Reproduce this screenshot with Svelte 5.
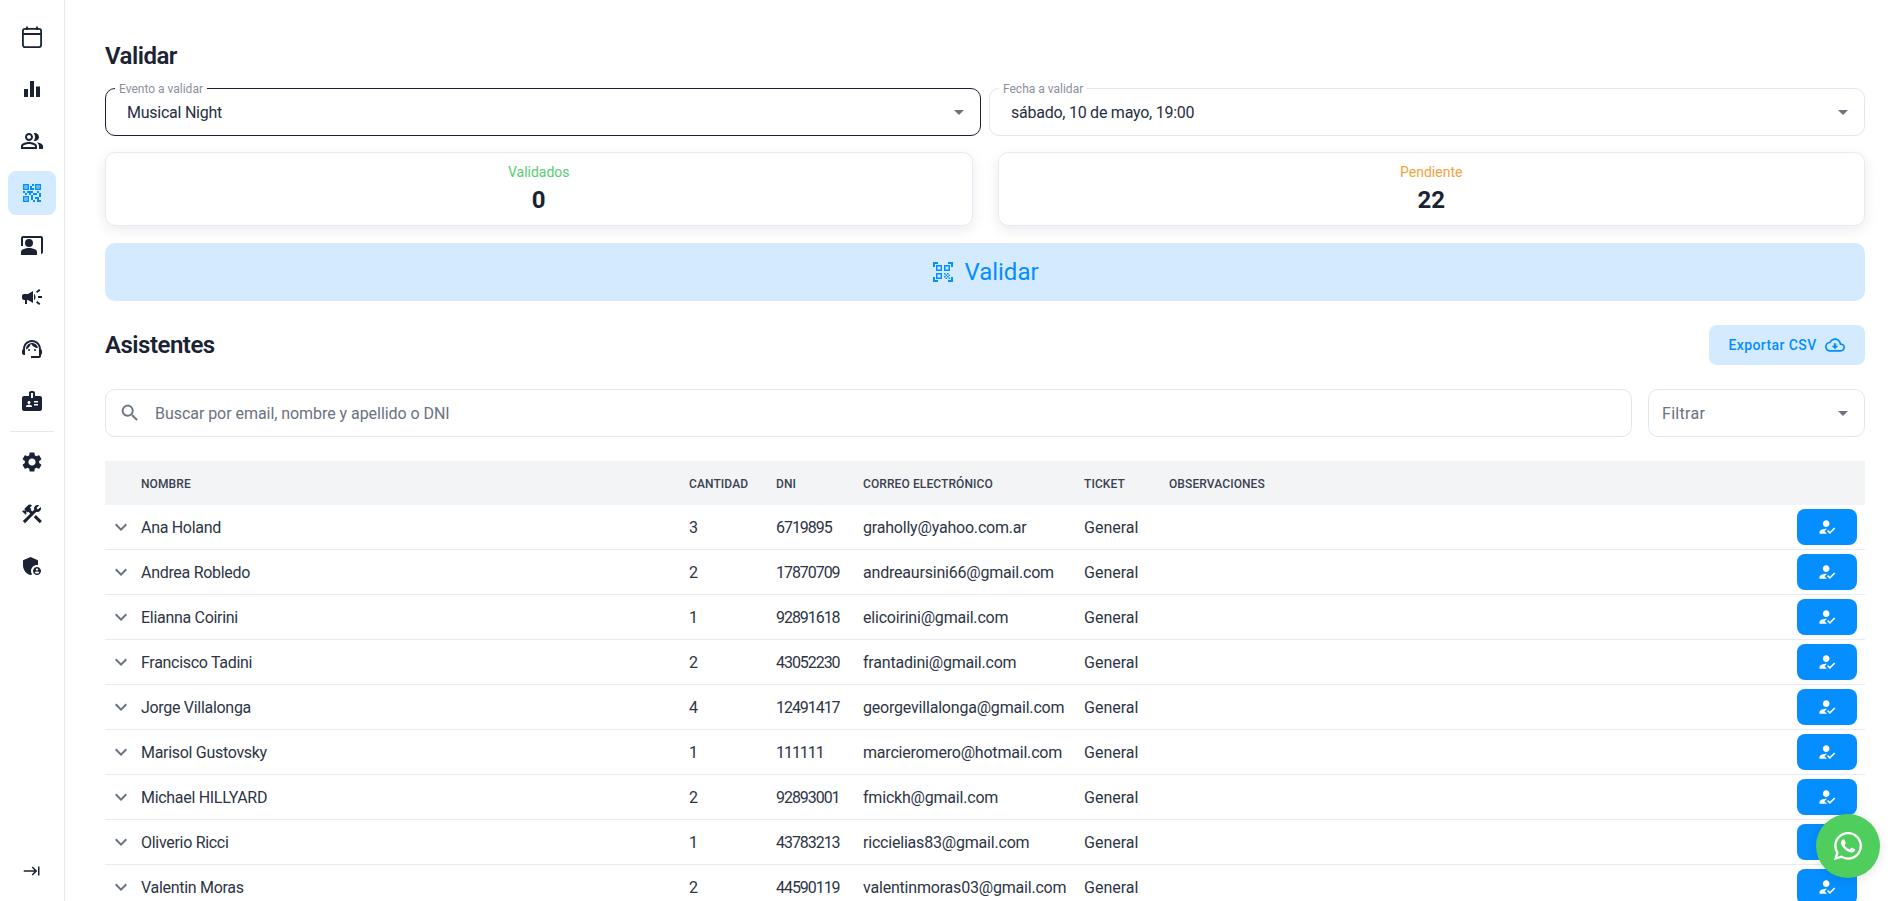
<script lang="ts">
	const topNav = [
		{ id: 'calendar', d: '', active: false },
		{ id: 'chart', d: 'M4 12h4v8H4zM10 4h4v16h-4zM16 9.5h4V20h-4z', active: false },
		{ id: 'people', d: 'M16.67 13.13C18.04 14.06 19 15.32 19 17v3h4v-3c0-2.18-3.57-3.47-6.33-3.87zM15 12c2.21 0 4-1.79 4-4s-1.79-4-4-4c-.47 0-.91.1-1.33.24C14.5 5.27 15 6.58 15 8s-.5 2.73-1.33 3.76c.42.14.86.24 1.33.24zM9 12c2.21 0 4-1.79 4-4s-1.79-4-4-4-4 1.79-4 4 1.79 4 4 4zm0-6c1.1 0 2 .9 2 2s-.9 2-2 2-2-.9-2-2 .9-2 2-2zM9 13c-2.67 0-8 1.34-8 4v3h16v-3c0-2.66-5.33-4-8-4zm6 5H3v-.99C3.2 16.29 6.3 15 9 15s5.8 1.29 6 2v1z', active: false },
		{ id: 'qr', d: 'M15 21h-2v-2h2v2zM13 14h-2v5h2v-5zM21 12h-2v4h2v-4zM19 10h-2v2h2v-2zM7 12H5v2h2v-2zM5 10H3v2h2v-2zM12 5h2V3h-2v2zM4.5 4.5v3h3v-3h-3zM9 9H3V3h6v6zM4.5 16.5v3h3v-3h-3zM9 21H3v-6h6v6zM16.5 4.5v3h3v-3h-3zM21 9h-6V3h6v6zM19 19v-3h-4v2h2v3h4v-2h-2zM17 12h-4v2h4v-2zM13 10H7v2h2v2h2v-2h2v-2zM14 9V7h-2V5h-2v4h4zM6.75 5.25h-1.5v1.5h1.5v-1.5zM6.75 17.25h-1.5v1.5h1.5v-1.5zM18.75 5.25h-1.5v1.5h1.5v-1.5z', active: true },
		{ id: 'present', d: 'M21 3H3C1.9 3 1 3.9 1 5v8h2V5h18v16c1.1 0 2-.9 2-2V5c0-1.1-.9-2-2-2zM13 10a4 4 0 1 1-8 0 4 4 0 0 1 8 0zM15.39 16.56C13.71 15.7 11.53 15 9 15c-2.53 0-4.71.7-6.39 1.56C1.61 17.07 1 18.1 1 19.22V22h16v-2.78c0-1.12-.61-2.15-1.61-2.66z', active: false },
		{ id: 'campaign', d: 'M18 11v2h4v-2h-4zm-2 6.61c.96.71 2.21 1.65 3.2 2.39.4-.53.8-1.07 1.2-1.6-.99-.74-2.24-1.68-3.2-2.4-.4.54-.8 1.08-1.2 1.61zM20.4 5.6c-.4-.53-.8-1.07-1.2-1.6-.99.74-2.24 1.68-3.2 2.4.4.53.8 1.07 1.2 1.6.96-.72 2.21-1.65 3.2-2.4zM4 9c-1.1 0-2 .9-2 2v2c0 1.1.9 2 2 2h1v4h2v-4h1l5 3V6L8 9H4zm11.5 3c0-1.33-.58-2.53-1.5-3.35v6.69c.92-.81 1.5-2.01 1.5-3.34z', active: false },
		{ id: 'support', d: 'M21 12.22C21 6.73 16.74 3 12 3c-4.69 0-9 3.65-9 9.28-.6.34-1 .98-1 1.72v2c0 1.1.9 2 2 2h1v-6.1c0-3.87 3.13-7 7-7s7 3.13 7 7V19h-8v2h8c1.1 0 2-.9 2-2v-1.22c.59-.31 1-.92 1-1.64v-2.3c0-.7-.41-1.31-1-1.62zM10 13a1 1 0 1 1-2 0 1 1 0 0 1 2 0zM16 13a1 1 0 1 1-2 0 1 1 0 0 1 2 0zM18 11.03C17.52 8.18 15.04 6 12.05 6c-3.03 0-6.29 2.51-6.03 6.45 2.47-1.01 4.33-3.21 4.86-5.89 1.31 2.63 4 4.44 7.12 4.47z', active: false },
		{ id: 'badge', d: 'M20 7h-5V4c0-1.1-.9-2-2-2h-2c-1.1 0-2 .9-2 2v3H4c-1.1 0-2 .9-2 2v11c0 1.1.9 2 2 2h16c1.1 0 2-.9 2-2V9c0-1.1-.9-2-2-2zM9 12c.83 0 1.5.67 1.5 1.5S9.83 15 9 15s-1.5-.67-1.5-1.5S8.17 12 9 12zm3 6H6v-.75c0-1 2-1.5 3-1.5s3 .5 3 1.5V18zm1-9h-2V4h2v5zm5 7.5h-4V15h4v1.5zm0-3h-4V12h4v1.5z', active: false }
	];

	const bottomNav = [
		{ id: 'settings', d: 'M19.14 12.94c.04-.3.06-.61.06-.94 0-.32-.02-.64-.07-.94l2.03-1.58c.18-.14.23-.41.12-.61l-1.92-3.32c-.12-.22-.37-.29-.59-.22l-2.39.96c-.5-.38-1.03-.7-1.62-.94l-.36-2.54c-.04-.24-.24-.41-.48-.41h-3.84c-.24 0-.43.17-.47.41l-.36 2.54c-.59.24-1.13.57-1.62.94l-2.39-.96c-.22-.08-.47 0-.59.22L2.74 8.87c-.12.21-.08.47.12.61l2.03 1.58c-.05.3-.09.63-.09.94s.02.64.07.94l-2.03 1.58c-.18.14-.23.41-.12.61l1.92 3.32c.12.22.37.29.59.22l2.39-.96c.5.38 1.03.7 1.62.94l.36 2.54c.05.24.24.41.48.41h3.84c.24 0 .44-.17.47-.41l.36-2.54c.59-.24 1.13-.56 1.62-.94l2.39.96c.22.08.47 0 .59-.22l1.92-3.32c.12-.22.07-.47-.12-.61l-2.01-1.58zM12 15.6c-1.98 0-3.6-1.62-3.6-3.6s1.62-3.6 3.6-3.6 3.6 1.62 3.6 3.6-1.62 3.6-3.6 3.6z' },
		{ id: 'tools', d: 'm13.7826 15.1719 2.1213-2.1213 5.9963 5.9962-2.1213 2.1213zM17.5 10c1.93 0 3.5-1.57 3.5-3.5 0-.58-.16-1.12-.41-1.6l-2.7 2.7-1.49-1.49 2.7-2.7c-.48-.25-1.02-.41-1.6-.41C15.57 3 14 4.57 14 6.5c0 .41.08.8.21 1.16l-1.85 1.85-1.78-1.78.71-.71-1.41-1.41L12 3.49c-1.17-1.17-3.07-1.17-4.24 0L4.22 7.03l1.41 1.41H2.81l-.71.71 3.54 3.54.71-.71V9.15l1.41 1.41.71-.71 1.78 1.78-7.41 7.41 2.12 2.12L16.34 9.79c.36.13.75.21 1.16.21z' },
		{ id: 'admin', d: 'M17 11c.34 0 .67.04 1 .09V6.27L10.5 3 3 6.27v4.91c0 4.54 3.2 8.79 7.5 9.82.55-.13 1.08-.32 1.6-.55-.69-.98-1.1-2.17-1.1-3.45 0-3.31 2.69-6 6-6zM17 13c-2.21 0-4 1.79-4 4s1.79 4 4 4 4-1.79 4-4-1.79-4-4-4zm0 1.38c.62 0 1.12.51 1.12 1.12s-.51 1.12-1.12 1.12-1.12-.51-1.12-1.12.5-1.12 1.12-1.12zm0 5.37c-.93 0-1.74-.46-2.24-1.17.05-.72 1.51-1.08 2.24-1.08s2.19.36 2.24 1.08c-.5.71-1.31 1.17-2.24 1.17z' }
	];

	const attendees = [
		{ name: 'Ana Holand', qty: 3, dni: '6719895', email: 'graholly@yahoo.com.ar' },
		{ name: 'Andrea Robledo', qty: 2, dni: '17870709', email: 'andreaursini66@gmail.com' },
		{ name: 'Elianna Coirini', qty: 1, dni: '92891618', email: 'elicoirini@gmail.com' },
		{ name: 'Francisco Tadini', qty: 2, dni: '43052230', email: 'frantadini@gmail.com' },
		{ name: 'Jorge Villalonga', qty: 4, dni: '12491417', email: 'georgevillalonga@gmail.com' },
		{ name: 'Marisol Gustovsky', qty: 1, dni: '111111', email: 'marcieromero@hotmail.com' },
		{ name: 'Michael HILLYARD', qty: 2, dni: '92893001', email: 'fmickh@gmail.com' },
		{ name: 'Oliverio Ricci', qty: 1, dni: '43783213', email: 'riccielias83@gmail.com' },
		{ name: 'Valentin Moras', qty: 2, dni: '44590119', email: 'valentinmoras03@gmail.com' }
	];

	const caret = 'M7 10l5 5 5-5z';
</script>

<div class="shell">
	<aside class="sidebar">
		{#each topNav as item}
			<button class="nav-item" class:active={item.active} aria-label={item.id}>
				{#if item.id === 'calendar'}
					<svg viewBox="0 0 24 24" class="stroke-icon"><rect x="2.9" y="3.9" width="18.2" height="18.2" rx="2" /><path d="M3 9h18M7 1.5V5M17 1.5V5" /></svg>
				{:else}
					<svg viewBox="0 0 24 24"><path d={item.d} /></svg>
				{/if}
			</button>
		{/each}
		<div class="nav-divider"></div>
		{#each bottomNav as item}
			<button class="nav-item" aria-label={item.id}>
				<svg viewBox="0 0 24 24"><path d={item.d} /></svg>
			</button>
		{/each}
		<button class="nav-item collapse" aria-label="expandir">
			<svg viewBox="0 0 24 24"><path d="M11.59 7.41 15.17 11H1v2h14.17l-3.59 3.59L13 18l6-6-6-6-1.41 1.41zM20 6v12h2V6h-2z" /></svg>
		</button>
	</aside>

	<main class="content">
		<h1>Validar</h1>

		<div class="selects">
			<div class="field focused">
				<span class="field-label">Evento a validar</span>
				<span class="field-value">Musical Night</span>
				<svg viewBox="0 0 24 24" class="caret"><path d={caret} /></svg>
			</div>
			<div class="field">
				<span class="field-label">Fecha a validar</span>
				<span class="field-value">sábado, 10 de mayo, 19:00</span>
				<svg viewBox="0 0 24 24" class="caret"><path d={caret} /></svg>
			</div>
		</div>

		<div class="stats">
			<div class="stat">
				<span class="stat-label green">Validados</span>
				<strong>0</strong>
			</div>
			<div class="stat">
				<span class="stat-label orange">Pendiente</span>
				<strong>22</strong>
			</div>
		</div>

		<button class="validate">
			<svg viewBox="0 0 24 24"><path d="M9.5 6.5v3h-3v-3h3M11 5H5v6h6V5zm-1.5 9.5v3h-3v-3h3M11 13H5v6h6v-6zm6.5-6.5v3h-3v-3h3M19 5h-6v6h6V5zm-6 8h1.5v1.5H13V13zm1.5 1.5H16V16h-1.5v-1.5zM16 13h1.5v1.5H16V13zm-3 3h1.5v1.5H13V16zm1.5 1.5H16V19h-1.5v-1.5zM16 16h1.5v1.5H16V16zm1.5-1.5H19V16h-1.5v-1.5zm0 3H19V19h-1.5v-1.5zM22 7h-2V4h-3V2h5v5zm0 15v-5h-2v3h-3v2h5zM2 22h5v-2H4v-3H2v5zM2 2v5h2V4h3V2H2z" /></svg>
			Validar
		</button>

		<div class="section-head">
			<h2>Asistentes</h2>
			<button class="export">
				Exportar CSV
				<svg viewBox="0 0 24 24"><path d="M19.35 10.04C18.67 6.59 15.64 4 12 4 9.11 4 6.6 5.64 5.35 8.04 2.34 8.36 0 10.91 0 14c0 3.31 2.69 6 6 6h13c2.76 0 5-2.24 5-5 0-2.64-2.05-4.78-4.65-4.96zM19 18H6c-2.21 0-4-1.79-4-4 0-2.05 1.53-3.76 3.56-3.97l1.07-.11.5-.95C8.08 7.14 9.94 6 12 6c2.62 0 4.88 1.86 5.39 4.43l.3 1.5 1.53.11c1.56.1 2.78 1.41 2.78 2.96 0 1.65-1.35 3-3 3zm-5.55-8h-2.9v3H8l4 4 4-4h-2.55z" /></svg>
			</button>
		</div>

		<div class="filters">
			<div class="search">
				<svg viewBox="0 0 24 24"><path d="M15.5 14h-.79l-.28-.27C15.41 12.59 16 11.11 16 9.5 16 5.91 13.09 3 9.5 3S3 5.91 3 9.5 5.91 16 9.5 16c1.61 0 3.09-.59 4.23-1.57l.27.28v.79l5 4.99L20.49 19l-4.99-5zm-6 0C7.01 14 5 11.99 5 9.5S7.01 5 9.5 5 14 7.01 14 9.5 11.99 14 9.5 14z" /></svg>
				<span>Buscar por email, nombre y apellido o DNI</span>
			</div>
			<div class="filter">
				<span>Filtrar</span>
				<svg viewBox="0 0 24 24" class="caret"><path d={caret} /></svg>
			</div>
		</div>

		<table>
			<colgroup>
				<col style="width:36px" />
				<col style="width:548px" />
				<col style="width:87px" />
				<col style="width:87px" />
				<col style="width:221px" />
				<col style="width:85px" />
				<col />
				<col style="width:68px" />
			</colgroup>
			<thead>
				<tr>
					<th></th>
					<th>Nombre</th>
					<th>Cantidad</th>
					<th>DNI</th>
					<th>Correo electrónico</th>
					<th>Ticket</th>
					<th>Observaciones</th>
					<th></th>
				</tr>
			</thead>
			<tbody>
				{#each attendees as a}
					<tr>
						<td class="expand">
							<svg viewBox="0 0 24 24"><path d="M16.59 8.59 12 13.17 7.41 8.59 6 10l6 6 6-6z" /></svg>
						</td>
						<td class="name">{a.name}</td>
						<td>{a.qty}</td>
						<td class="dni">{a.dni}</td>
						<td class="email">{a.email}</td>
						<td>General</td>
						<td></td>
						<td>
							<button class="check-in" aria-label="validar asistente">
								<svg viewBox="0 0 24 24"><path d="M9 17l3-2.94c-.39-.04-.68-.06-1-.06-2.67 0-8 1.34-8 4v2h9l-3-3zm2-5c2.21 0 4-1.79 4-4s-1.79-4-4-4-4 1.79-4 4 1.79 4 4 4m4.47 8.5L12 17l1.4-1.41 2.07 2.08 5.13-5.17 1.4 1.41z" /></svg>
							</button>
						</td>
					</tr>
				{/each}
			</tbody>
		</table>
	</main>

	<button class="whatsapp" aria-label="WhatsApp">
		<svg viewBox="0 0 24 24"><path d="M17.472 14.382c-.297-.149-1.758-.867-2.03-.967-.273-.099-.471-.148-.67.15-.197.297-.767.966-.94 1.164-.173.199-.347.223-.644.075-.297-.15-1.255-.463-2.39-1.475-.883-.788-1.48-1.761-1.653-2.059-.173-.297-.018-.458.13-.606.134-.133.298-.347.446-.52.149-.174.198-.298.298-.497.099-.198.05-.371-.025-.52-.075-.149-.669-1.612-.916-2.207-.242-.579-.487-.5-.669-.51-.173-.008-.371-.01-.57-.01-.198 0-.52.074-.792.372-.272.297-1.04 1.016-1.04 2.479 0 1.462 1.065 2.875 1.213 3.074.149.198 2.096 3.2 5.077 4.487.709.306 1.262.489 1.694.625.712.227 1.36.195 1.871.118.571-.085 1.758-.719 2.006-1.413.248-.694.248-1.289.173-1.413-.074-.124-.272-.198-.57-.347m-5.421 7.403h-.004a9.87 9.87 0 01-5.031-1.378l-.361-.214-3.741.982.998-3.648-.235-.374a9.86 9.86 0 01-1.51-5.26c.001-5.45 4.436-9.884 9.888-9.884 2.64 0 5.122 1.03 6.988 2.898a9.825 9.825 0 012.893 6.994c-.003 5.45-4.437 9.884-9.885 9.884m8.413-18.297A11.815 11.815 0 0012.05 0C5.495 0 .16 5.335.157 11.892c0 2.096.547 4.142 1.588 5.945L.057 24l6.305-1.654a11.882 11.882 0 005.683 1.448h.005c6.554 0 11.89-5.335 11.893-11.893a11.821 11.821 0 00-3.48-8.413z" /></svg>
	</button>
</div>

<style>
	:global(body) {
		margin: 0;
		background: #fff;
		font-family: Roboto, "Liberation Sans", sans-serif;
		color: #1a2233;
	}

	button {
		font: inherit;
		border: none;
		cursor: pointer;
	}

	svg {
		display: block;
		fill: currentColor;
	}

	.shell {
		display: flex;
		height: 901px;
		overflow: hidden;
		position: relative;
	}

	.sidebar {
		flex: 0 0 65px;
		box-sizing: border-box;
		border-right: 1px solid #e5e7f2;
		padding: 15px 0 8px;
		display: flex;
		flex-direction: column;
		align-items: center;
		gap: 8px;
	}

	.nav-item {
		width: 48px;
		height: 44px;
		flex: none;
		border-radius: 8px;
		background: transparent;
		color: #1a2233;
		display: flex;
		align-items: center;
		justify-content: center;
		padding: 0;
		margin-right: 1px;
	}

	.nav-item svg {
		width: 24px;
		height: 24px;
	}

	.nav-item .stroke-icon {
		fill: none;
		stroke: currentColor;
		stroke-width: 1.8;
	}

	.nav-item.active {
		background: #d4ebff;
		color: #058eff;
	}

	.nav-divider {
		width: 44px;
		height: 1px;
		background: #e5e7eb;
		flex: none;
	}

	.collapse {
		margin-top: auto;
	}

	.collapse svg {
		width: 18px;
		height: 18px;
	}

	.content {
		flex: 1;
		min-width: 0;
		padding: 40px 36px 0 40px;
	}

	h1,
	h2 {
		margin: 0;
		font-size: 24px;
		line-height: 32px;
		font-weight: 600;
		letter-spacing: -0.5px;
		color: #1a2233;
	}

	.selects {
		display: grid;
		grid-template-columns: 1fr 1fr;
		gap: 8px;
		margin-top: 16px;
	}

	.field {
		position: relative;
		height: 48px;
		box-sizing: border-box;
		border: 1px solid #e5e7f0;
		border-radius: 10px;
		display: flex;
		align-items: center;
		justify-content: space-between;
		padding: 0 9px 0 21px;
	}

	.field.focused {
		border-color: #1a2233;
	}

	.field-label {
		position: absolute;
		left: 9px;
		top: -7px;
		padding: 0 4px;
		background: #fff;
		font-size: 12px;
		line-height: 14px;
		color: #8b8f9c;
	}

	.field-value {
		font-size: 16px;
		letter-spacing: -0.25px;
		color: #262f40;
	}

	.caret {
		width: 24px;
		height: 24px;
		color: #6b7280;
		flex: none;
	}

	.stats {
		display: grid;
		grid-template-columns: 1fr 1fr;
		gap: 25px;
		margin-top: 16px;
	}

	.stat {
		height: 74px;
		box-sizing: border-box;
		border: 1px solid #e8e9f2;
		border-radius: 10px;
		box-shadow: 0 4px 14px rgba(26, 34, 51, 0.09);
		display: flex;
		flex-direction: column;
		align-items: center;
		padding-top: 9px;
	}

	.stat-label {
		font-size: 14px;
		line-height: 20px;
	}

	.green {
		color: #58cc72;
	}

	.orange {
		color: #f2a23a;
	}

	.stat strong {
		font-size: 24px;
		line-height: 32px;
		font-weight: 700;
		margin-top: 2px;
		color: #1a2233;
	}

	.validate {
		width: 100%;
		height: 58px;
		margin-top: 17px;
		border-radius: 10px;
		background: #d4ebff;
		color: #058eff;
		font-size: 24px;
		display: flex;
		align-items: center;
		justify-content: center;
		gap: 9px;
	}

	.validate svg {
		width: 24px;
		height: 24px;
	}

	.section-head {
		display: flex;
		align-items: center;
		justify-content: space-between;
		margin-top: 24px;
		height: 40px;
	}

	.export {
		width: 156px;
		height: 40px;
		border-radius: 8px;
		background: #d4ebff;
		color: #058eff;
		font-size: 14px;
		font-weight: 500;
		letter-spacing: 0.4px;
		display: flex;
		align-items: center;
		justify-content: center;
		gap: 8px;
		padding: 0 1px 0 0;
	}

	.export svg {
		width: 20px;
		height: 20px;
	}

	.filters {
		display: flex;
		gap: 16px;
		margin-top: 24px;
	}

	.search,
	.filter {
		height: 48px;
		box-sizing: border-box;
		border: 1px solid #e5e7eb;
		border-radius: 10px;
		display: flex;
		align-items: center;
		color: #6b7280;
		font-size: 16px;
	}

	.search {
		flex: 1;
		padding-left: 13px;
		gap: 14px;
		letter-spacing: -0.05px;
	}

	.search svg {
		width: 22px;
		height: 22px;
	}

	.filter {
		flex: 0 0 217px;
		padding: 0 9px 0 13px;
		justify-content: space-between;
		letter-spacing: 0.3px;
	}

	.filter span {
		padding-top: 1px;
	}

	table {
		width: 100%;
		margin-top: 24px;
		border-collapse: separate;
		border-spacing: 0;
		table-layout: fixed;
	}

	thead tr {
		background: #f3f4f6;
	}

	th {
		height: 44px;
		box-sizing: border-box;
		padding: 1px 0 0;
		text-align: left;
		font-size: 12px;
		font-weight: 500;
		text-transform: uppercase;
		letter-spacing: 0.1px;
		color: #3a4252;
	}

	td {
		height: 45px;
		box-sizing: border-box;
		padding: 0;
		font-size: 16px;
		color: #2d3545;
		border-bottom: 1px solid #e6eaf2;
	}

	td.name {
		letter-spacing: -0.3px;
	}

	td.dni {
		letter-spacing: -1.05px;
	}

	td.email {
		letter-spacing: -0.2px;
	}

	.expand svg {
		width: 24px;
		height: 24px;
		margin-left: 4px;
		color: #6b7280;
	}

	.check-in {
		width: 60px;
		height: 36px;
		border-radius: 8px;
		background: #058eff;
		color: #fff;
		display: flex;
		align-items: center;
		justify-content: center;
		padding: 0;
	}

	.check-in svg {
		width: 20px;
		height: 20px;
	}

	.whatsapp {
		position: absolute;
		left: 1816px;
		top: 814px;
		width: 64px;
		height: 64px;
		border-radius: 50%;
		background: #4fce5d;
		color: #fff;
		display: flex;
		align-items: center;
		justify-content: center;
		padding: 0;
		box-shadow: 0 2px 10px rgba(26, 34, 51, 0.12);
	}

	.whatsapp svg {
		width: 28px;
		height: 28px;
	}
</style>
